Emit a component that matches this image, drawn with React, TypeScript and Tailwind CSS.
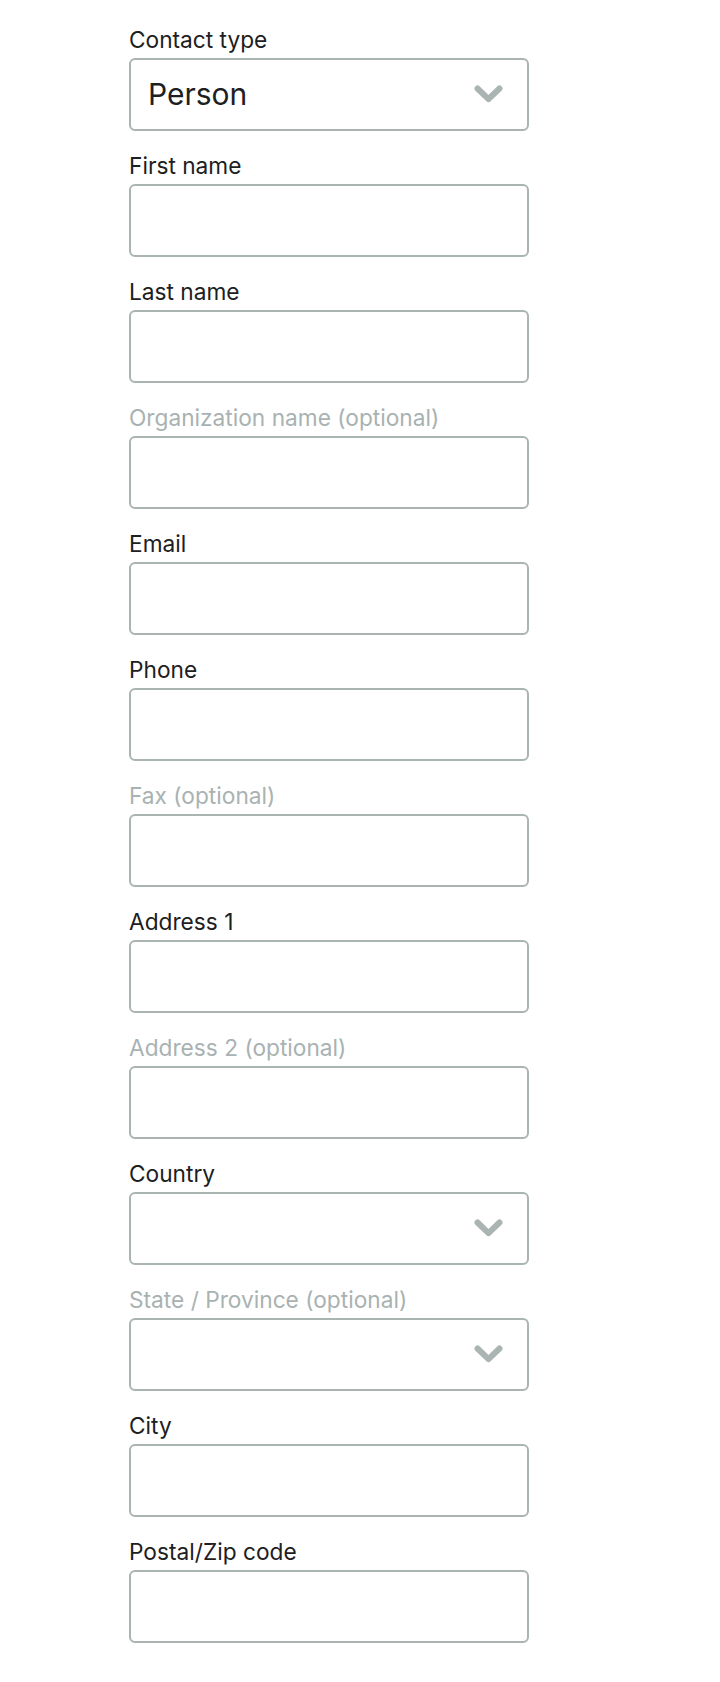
import React from "react";

type Field = {
  label: string;
  optional?: boolean;
  select?: boolean;
  value?: string;
};

const fields: Field[] = [
  { label: "Contact type", select: true, value: "Person" },
  { label: "First name" },
  { label: "Last name" },
  { label: "Organization name (optional)", optional: true },
  { label: "Email" },
  { label: "Phone" },
  { label: "Fax (optional)", optional: true },
  { label: "Address 1" },
  { label: "Address 2 (optional)", optional: true },
  { label: "Country", select: true },
  { label: "State / Province (optional)", optional: true, select: true },
  { label: "City" },
  { label: "Postal/Zip code" },
];

const Chevron = () => (
  <svg width="29" height="19" viewBox="0 0 29 19" className="shrink-0">
    <path
      d="M3.5 3.5 L14.5 14.2 L25.5 3.5"
      fill="none"
      stroke="#aab4b3"
      strokeWidth="6"
      strokeLinecap="round"
      strokeLinejoin="round"
    />
  </svg>
);

export default function App() {
  return (
    <div
      className="min-h-[1682px] bg-white pt-[26px] pl-[129px]"
      style={{ fontFamily: "Inter, 'Noto Sans', sans-serif" }}
    >
      <form className="flex w-[400px] flex-col gap-[21px]">
        {fields.map((f) => (
          <div key={f.label} className="flex flex-col gap-[4px]">
            <label
              className={
                f.optional
                  ? "text-[22.7px] leading-[28px] text-[#a9b2b2]"
                  : "text-[22.7px] leading-[28px] text-[#1d2021]"
              }
            >
              {f.label}
            </label>
            <div className="flex h-[73px] items-center justify-between rounded-[6px] border-2 border-[#aab4b3] bg-white pl-[17px] pr-[24px]">
              <span className="text-[30px] text-[#1d2021]">{f.value ?? ""}</span>
              {f.select && <Chevron />}
            </div>
          </div>
        ))}
      </form>
    </div>
  );
}
